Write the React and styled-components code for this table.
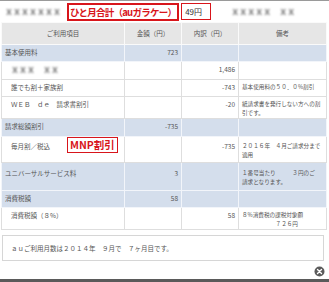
import styled, { createGlobalStyle } from "styled-components";

const GlobalStyle = createGlobalStyle`
    html, body {
        margin: 0;
        padding: 0;
        background: #fff;
    }
    body {
        width: 329px;
        height: 282px;
        overflow: hidden;
        font-family: "Noto Sans CJK JP", "Noto Sans", sans-serif;
        color: #555;
    }
`;

const Page = styled.div`
    width: 329px;
    height: 282px;
    display: flex;
    flex-direction: column;
    border-top: 1px solid #9a9a9a;
    box-sizing: border-box;
`;

const TopBar = styled.div`
    height: 21px;
    display: flex;
    align-items: center;
    padding-left: 5px;
    box-sizing: border-box;
`;

const Blurred = styled.span`
    font-size: 8px;
    font-weight: 700;
    color: #666;
    filter: blur(0.9px);
    white-space: nowrap;
    margin-left: ${(p) => p.$ml || 0}px;
`;

const TotalLabel = styled.div`
    margin-left: 6px;
    height: 18px;
    border: 2px solid #d8151b;
    box-sizing: border-box;
    padding: 0 1px;
    display: flex;
    align-items: center;
    color: #d8151b;
    font-weight: 700;
    font-size: 9.5px;
    letter-spacing: -0.75px;
    white-space: nowrap;
`;

const TotalValue = styled.div`
    margin-left: 2px;
    width: 30px;
    height: 17px;
    border: 1.5px solid #d8151b;
    box-sizing: border-box;
    padding-left: 3px;
    display: flex;
    align-items: center;
    font-size: 8px;
    color: #333;
`;

const Table = styled.table`
    margin-left: 1px;
    width: 326px;
    border-collapse: collapse;
    table-layout: fixed;
    font-size: 6.5px;
    line-height: 9px;
`;

const HeadCell = styled.th`
    height: 21px;
    background: #e6e6e6;
    border: 1px solid #fafafa;
    font-weight: 400;
    font-size: 6.5px;
    color: #555;
    padding: 0;
    text-align: center;
`;

const Row = styled.tr`
    height: ${(p) => p.$h}px;
    background: ${(p) => (p.$main ? "#d4deec" : "#fff")};
`;

const Cell = styled.td`
    border: 1px solid ${(p) => (p.$main ? "#f2f5fa" : "#dedede")};
    vertical-align: top;
    padding: ${(p) => p.$pt || 3}px 3px 0 ${(p) => p.$pl || 3}px;
    text-align: ${(p) => (p.$num ? "right" : "left")};
    white-space: nowrap;
    overflow: hidden;
`;

const Note = styled.span`
    font-size: 5.6px;
    line-height: 9px;
    display: block;
    white-space: nowrap;
`;

const Badge = styled.span`
    display: inline-block;
    vertical-align: top;
    margin: -5px 0 0 17px;
    border: 1.5px solid #d8151b;
    padding: 0 2px;
    height: 16px;
    box-sizing: border-box;
    line-height: 13px;
    font-size: 10.5px;
    font-weight: 700;
    color: #d8151b;
    background: #fff;
`;

const InfoBox = styled.div`
    margin: 5px 0 0 2px;
    width: 322px;
    height: 26px;
    border: 1px solid #d6d6d6;
    box-sizing: border-box;
    display: flex;
    align-items: center;
    padding-left: 8px;
    font-size: 6.5px;
    color: #555;
`;

const Footer = styled.div`
    flex: 1;
    display: flex;
    justify-content: flex-end;
    align-items: flex-end;
    padding: 0 4px 2px 0;
    border-bottom: 3px solid #5a5a5a;
`;

const Close = () => (
    <svg width="11" height="11" viewBox="0 0 11 11">
        <circle cx="5.5" cy="5.5" r="5" fill="#5b5b5b" />
        <path d="M3.5 3.5 L7.5 7.5 M7.5 3.5 L3.5 7.5" stroke="#fff" strokeWidth="1.4" strokeLinecap="round" />
    </svg>
);

const rows = [
    { main: true, h: 17, label: "基本使用料", amount: "723" },
    { h: 18, blur: "ＸＸＸ　ＸＸ", detail: "1,486" },
    { h: 17, label: "誰でも割＋家族割", detail: "-743", note: ["基本使用料の５０．０%割引"] },
    { h: 22, label: "ＷＥＢ　ｄｅ　請求書割引", detail: "-20", note: ["紙請求書を発行しない方への割", "引です。"] },
    { main: true, h: 18, label: "請求総額割引", amount: "-735" },
    { h: 26, pt: 5, label: "毎月割／税込", badge: "MNP割引", detail: "-735", note: ["２０１６年　４月ご請求分まで", "適用"] },
    { main: true, h: 28, pt: 6, label: "ユニバーサルサービス料", amount: "3", note: ["１番号当たり　　　３円のご", "請求となります。"] },
    { main: true, h: 17, label: "消費税額", amount: "58" },
    { h: 20, label: "消費税額（８%）", detail: "58", note: ["８%消費税の課税対象額", "　　　　　　７２６円"] },
];

const App = () => {
    return (
        <>
            <GlobalStyle />
            <Page>
                <TopBar>
                    <Blurred>ＸＸＸＸＸＸＸ</Blurred>
                    <TotalLabel>ひと月合計（auガラケー）</TotalLabel>
                    <TotalValue>49円</TotalValue>
                    <Blurred $ml={20}>ＸＸＸＸＸ　ＸＸ</Blurred>
                </TopBar>
                <Table>
                    <colgroup>
                        <col style={{ width: 123 }} />
                        <col style={{ width: 57 }} />
                        <col style={{ width: 57 }} />
                        <col />
                    </colgroup>
                    <thead>
                        <tr>
                            <HeadCell>ご利用項目</HeadCell>
                            <HeadCell>金額（円）</HeadCell>
                            <HeadCell>内訳（円）</HeadCell>
                            <HeadCell>備考</HeadCell>
                        </tr>
                    </thead>
                    <tbody>
                        {rows.map((r, i) => (
                            <Row key={i} $h={r.h} $main={r.main}>
                                <Cell $main={r.main} $pt={r.pt} $pl={r.main ? 3 : 9}>
                                    {r.blur ? <Blurred>{r.blur}</Blurred> : r.label}
                                    {r.badge && <Badge>{r.badge}</Badge>}
                                </Cell>
                                <Cell $main={r.main} $pt={r.pt} $num>{r.amount}</Cell>
                                <Cell $main={r.main} $pt={r.pt} $num>{r.detail}</Cell>
                                <Cell $main={r.main} $pt={r.pt}>
                                    {r.note && r.note.map((n, j) => <Note key={j}>{n}</Note>)}
                                </Cell>
                            </Row>
                        ))}
                    </tbody>
                </Table>
                <InfoBox>ａｕご利用月数は２０１４年　９月で　７ヶ月目です。</InfoBox>
                <Footer>
                    <Close />
                </Footer>
            </Page>
        </>
    );
};

export default App;
